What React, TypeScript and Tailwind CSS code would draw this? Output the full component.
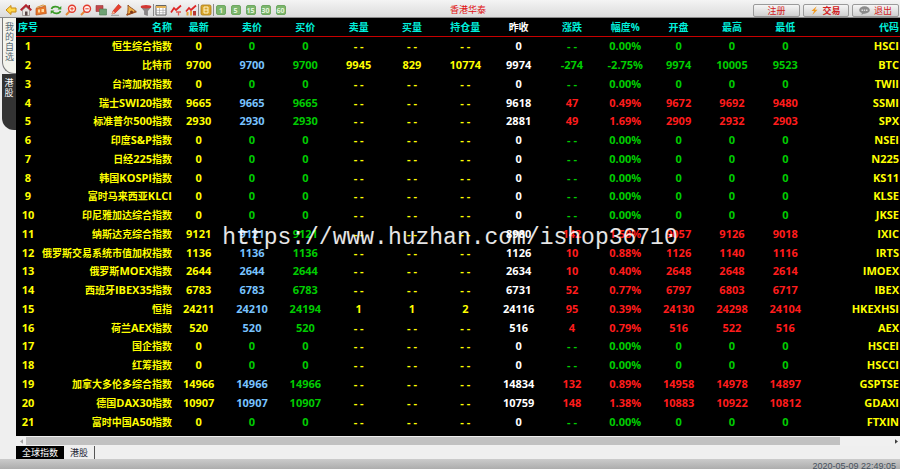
import { ReactNode, useState } from "react"

type Quote = {
  name: string
  last: string
  ask: string
  bid: string
  askVol?: string
  bidVol?: string
  holding?: string
  prev: string
  change?: string
  percent: string
  open: string
  high: string
  low: string
  code: string
}

const empty = (name: string, code: string): Quote => ({
  name,
  last: "0",
  ask: "0",
  bid: "0",
  prev: "0",
  percent: "0.00%",
  open: "0",
  high: "0",
  low: "0",
  code,
})

const quote = (
  name: string,
  last: string,
  prev: string,
  change: string,
  percent: string,
  open: string,
  high: string,
  low: string,
  code: string,
): Quote => ({
  name,
  last,
  ask: last,
  bid: last,
  prev,
  change,
  percent,
  open,
  high,
  low,
  code,
})

const quotes: Quote[] = [
  empty("恒生综合指数", "HSCI"),
  {
    ...quote("比特币", "9700", "9974", "-274", "-2.75%", "9974", "10005", "9523", "BTC"),
    askVol: "9945",
    bidVol: "829",
    holding: "10774",
  },
  empty("台湾加权指数", "TWII"),
  quote("瑞士SWI20指数", "9665", "9618", "47", "0.49%", "9672", "9692", "9480", "SSMI"),
  quote("标准普尔500指数", "2930", "2881", "49", "1.69%", "2909", "2932", "2903", "SPX"),
  empty("印度S&P指数", "NSEI"),
  empty("日经225指数", "N225"),
  empty("韩国KOSPI指数", "KS11"),
  empty("富时马来西亚KLCI", "KLSE"),
  empty("印尼雅加达综合指数", "JKSE"),
  quote("纳斯达克综合指数", "9121", "8980", "142", "1.58%", "9057", "9126", "9018", "IXIC"),
  quote("俄罗斯交易系统市值加权指数", "1136", "1126", "10", "0.88%", "1126", "1140", "1116", "IRTS"),
  quote("俄罗斯MOEX指数", "2644", "2634", "10", "0.40%", "2648", "2648", "2614", "IMOEX"),
  quote("西班牙IBEX35指数", "6783", "6731", "52", "0.77%", "6797", "6803", "6717", "IBEX"),
  {
    ...quote("恒指", "24211", "24116", "95", "0.39%", "24130", "24298", "24104", "HKEXHSI"),
    ask: "24210",
    bid: "24194",
    askVol: "1",
    bidVol: "1",
    holding: "2",
  },
  quote("荷兰AEX指数", "520", "516", "4", "0.79%", "516", "522", "516", "AEX"),
  empty("国企指数", "HSCEI"),
  empty("红筹指数", "HSCCI"),
  quote("加拿大多伦多综合指数", "14966", "14834", "132", "0.89%", "14958", "14978", "14897", "GSPTSE"),
  quote("德国DAX30指数", "10907", "10759", "148", "1.38%", "10883", "10922", "10812", "GDAXI"),
  empty("富时中国A50指数", "FTXIN"),
]

const columns = [
  "最新",
  "卖价",
  "买价",
  "卖量",
  "买量",
  "持仓量",
  "昨收",
  "涨跌",
  "幅度%",
  "开盘",
  "最高",
  "最低",
]

type Tool = { label: string; divider?: boolean; icon: ReactNode }

const tools: Tool[] = [
  {
    label: "后退",
    icon: <path d="M1 6 6 1.5V4h5v4H6v2.5z" fill="#ffd84a" stroke="#c98a10" />,
  },
  {
    label: "首页",
    icon: (
      <>
        <path d="M2.5 6v5.5h7V6L6 3z" fill="#e9e5e2" stroke="#8d8583" strokeWidth=".7" />
        <path d="M.7 6.3 6 1.3l5.3 5" fill="none" stroke="#b3202c" strokeWidth="2" />
        <path d="M8.5 1H10v3H8.5z" fill="#8a1d26" />
        <path d="M5 7.5h2.500v4H5z" fill="#5a4a4a" />
      </>
    ),
  },
  {
    label: "行情",
    icon: (
      <>
        <path d="M1 4.5 10.5 2l.8 7.5L1 11z" fill="#e8792b" stroke="#b9501a" strokeWidth=".7" />
        <path d="M1.5 3.5 8 1l3 1" fill="none" stroke="#d9953b" />
        <path d="M3 5.5h2v3H3zM6.5 5H9v3H6.5z" fill="#ffd9a0" />
      </>
    ),
  },
  {
    label: "刷新",
    icon: (
      <>
        <path d="M1.5 5c1-3 6-3 8-.8M10.5 7c-1 3-6 3-8 .8" fill="none" stroke="#3b9b27" strokeWidth="1.7" />
        <path d="M11.3 2v3.5H7.5zM.7 10V6.5h3.800z" fill="#3b9b27" />
      </>
    ),
  },
  {
    label: "放大",
    icon: (
      <>
        <path d="M1 11 4.5 7.5" stroke="#e88a3a" strokeWidth="2" />
        <circle cx="7" cy="4.8" r="3.5" fill="#fff0ee" stroke="#e33a2c" strokeWidth="1.4" />
        <path d="M5.3 4.8h3.4M7 3.1v3.4" stroke="#e33a2c" />
      </>
    ),
  },
  {
    label: "缩小",
    icon: (
      <>
        <path d="M1 11 4.5 7.5" stroke="#e88a3a" strokeWidth="2" />
        <circle cx="7" cy="4.8" r="3.5" fill="#fff0ee" stroke="#e33a2c" strokeWidth="1.4" />
        <path d="M5.3 4.8h3.4" stroke="#e33a2c" />
      </>
    ),
  },
  {
    label: "叠加",
    icon: (
      <>
        <path d="M1 1.500h7v6H1z" fill="#c6474a" stroke="#96383a" strokeWidth=".6" />
        <path d="M4.5 5h7v6h-7z" fill="#6fa274" stroke="#497b50" strokeWidth=".6" />
      </>
    ),
  },
  {
    label: "画线",
    icon: (
      <>
        <path d="M2 10 3 7l5.5-6.500L11.300 3 5 9z" fill="#e8402f" stroke="#c8382c" strokeWidth=".8" />
        <path d="M2 10 3 7l2 2z" fill="#f3c9a0" />
        <path d="M1 11.300h8" stroke="#999" />
      </>
    ),
  },
  {
    label: "预警",
    icon: (
      <>
        <path d="M3 1c1 2 5 3.500 8 6.500L2 11C3.300 8 3 4 3 1z" fill="#efb04a" stroke="#8b4a1c" strokeWidth=".9" />
        <path d="m1.500 11 10-3.500" stroke="#a3501f" strokeWidth="1.5" />
        <circle cx="6.5" cy="8" r="1.5" fill="#7a3517" />
      </>
    ),
  },
  {
    label: "筛选",
    icon: (
      <>
        <path d="M1 3h10L7.5 7v4.500l-3-1V7z" fill="#8a8587" stroke="#666" strokeWidth=".5" />
        <ellipse cx="6" cy="2.8" rx="5.3" ry="1.7" fill="#d33632" />
      </>
    ),
  },
  {
    label: "报价",
    divider: true,
    icon: (
      <>
        <path d="M1 1.5h10V11H1z" fill="#fff" stroke="#555" strokeWidth=".9" />
        <path d="M1 2h10v2H1z" fill="#e6b35a" />
        <path d="M1 6.3h10M1 8.7h10M4.5 4v7M8 4v7" stroke="#999" strokeWidth=".6" />
      </>
    ),
  },
  {
    label: "分时",
    icon: (
      <>
        <path d="M1 8.5 4 4l2 2 5-4.5" fill="none" stroke="#df2626" strokeWidth="1.7" />
        <path d="M6 8h5M8.5 8v3.500" stroke="#e35b55" strokeWidth="1.3" />
      </>
    ),
  },
  {
    label: "走势",
    icon: (
      <>
        <path d="M1.5 11.500V8h2v3.500zM5 11.500V7h2v4.500z" fill="#e4a23c" />
        <path d="M1 7.5 4 4l2 2 5-4.5" fill="none" stroke="#df2626" strokeWidth="1.7" />
        <path d="M8 7h3v4.500H8z" fill="#b93834" />
      </>
    ),
  },
  {
    label: "日线",
    divider: true,
    icon: (
      <>
        <rect x="1" y="1" width="10" height="10" rx="1.5" fill="#d9a62b" stroke="#a87915" strokeWidth=".8" />
        <path d="M4 3h4v6H4zM4 6h4" fill="none" stroke="#fff3c8" />
      </>
    ),
  },
]

const periods = ["1", "5", "15", "30", "60"]

const Toolbar = () => {
  return (
    <header className="relative flex h-[18px] shrink-0 items-center justify-between border-b border-[#8a8a8a] bg-linear-to-b from-[#f4f4f4] to-[#dcdcdc] pl-[3px] pt-[3px]">
      <nav className="flex items-center">
        {tools.map((tool) => (
          <button
            key={tool.label}
            aria-label={tool.label}
            className={`flex h-3 w-[15px] items-center justify-center ${
              tool.divider ? "border-l border-[#8a8a8a]" : ""
            }`}
          >
            <svg viewBox="0 0 12 12" className="h-3 w-3">
              {tool.icon}
            </svg>
          </button>
        ))}
        {periods.map((text) => (
          <button
            key={text}
            className={`flex h-3 w-[15px] items-center justify-center ${
              text === "1" ? "border-l border-[#8a8a8a]" : ""
            }`}
          >
            <span className="flex h-[10px] w-[10px] items-center justify-center rounded-xs border border-[#6ea860] bg-[#7cb66d] text-[7px] font-bold leading-none text-[#e4f5dc]">
              {text}
            </span>
          </button>
        ))}
      </nav>
      <h1 className="pointer-events-none absolute inset-x-0 top-1 ml-9 text-center text-[9px] leading-3 text-[#e01010]">
        香港华泰
      </h1>
      <div className="flex gap-[3px] pr-px text-[9px] text-[#d22020]">
        <button className="flex h-[13px] w-[47px] items-center justify-center rounded-xs border border-[#9a9a9a] bg-linear-to-b from-[#f6f6f6] to-[#cfcfcf] leading-none">
          注册
        </button>
        <button className="flex h-[13px] w-[46px] items-center justify-center gap-1 rounded-xs border border-[#9a9a9a] bg-linear-to-b from-[#f6f6f6] to-[#cfcfcf] font-bold leading-none">
          <svg viewBox="0 0 8 10" className="h-[9px] w-[7px]">
            <path d="M6.5 0 .5 5.5h3L1.5 10l6-6h-3z" fill="#f39a1e" />
          </svg>
          交易
        </button>
        <button className="flex h-[13px] w-[47px] items-center justify-center gap-1 rounded-xs border border-[#9a9a9a] bg-linear-to-b from-[#f6f6f6] to-[#cfcfcf] leading-none">
          <svg viewBox="0 0 11 9" className="h-[9px] w-[11px]">
            <ellipse cx="5.5" cy="4" rx="5.3" ry="3.7" fill="#8b8b8b" />
            <path d="M3 6.5 2.5 9l3-2z" fill="#8b8b8b" />
            <path d="M2.5 3.5H4V5H2.5zM4.8 3.5h1.400V5H4.800zM7 3.5h1.500V5H7z" fill="#ddd" />
          </svg>
          退出
        </button>
      </div>
    </header>
  )
}

// latin runs are set one size larger than the chinese characters
const IndexName = ({ name }: { name: string }) => {
  return (
    <>
      {name.split(/([\w&]+)/).map((part, i) =>
        i % 2 ? (
          <span key={i} className="text-[11px]">
            {part}
          </span>
        ) : (
          part
        ),
      )}
    </>
  )
}

const QuoteRow = ({ row, index }: { row: Quote; index: number }) => {
  const isUp = row.change !== undefined && !row.change.startsWith("-")
  const trend = isUp ? "text-[#ff1c1c]" : "text-[#00cc00]"
  return (
    <tr>
      <td>{index}</td>
      <td className="whitespace-nowrap text-right text-[10px]">
        <IndexName name={row.name} />
      </td>
      <td>{row.last}</td>
      <td className={row.ask === "0" ? "text-[#00cc00]" : "text-[#78c3ff]"}>
        {row.ask}
      </td>
      <td className="text-[#00cc00]">{row.bid}</td>
      <td>{row.askVol ?? "- -"}</td>
      <td>{row.bidVol ?? "- -"}</td>
      <td>{row.holding ?? "- -"}</td>
      <td className="text-white">{row.prev}</td>
      <td className={trend}>{row.change ?? "- -"}</td>
      <td className={trend}>{row.percent}</td>
      <td className={trend}>{row.open}</td>
      <td className={trend}>{row.high}</td>
      <td className={trend}>{row.low}</td>
      <td className="pr-px text-right">{row.code}</td>
    </tr>
  )
}

const QuoteTable = () => {
  return (
    <div className="min-h-0 flex-1 bg-black pb-[5px]">
      <table className="h-full w-full table-fixed border-separate border-spacing-0 text-center text-[11px] font-bold leading-4 text-[#ffff00]">
        <colgroup>
          <col className="w-6" />
          <col className="w-[132px]" />
          {columns.map((c) => (
            <col key={c} />
          ))}
          <col className="w-[88px]" />
        </colgroup>
        <thead>
          <tr className="h-[19px] text-[10px] text-[#00f0dc] *:border-b *:border-[#c80000]">
            <th className="whitespace-nowrap">序号</th>
            <th className="text-right">名称</th>
            {columns.map((c) => (
              <th key={c} className={c === "昨收" ? "text-white" : ""}>
                {c}
              </th>
            ))}
            <th className="pr-px text-right">代码</th>
          </tr>
        </thead>
        <tbody>
          {quotes.map((row, i) => (
            <QuoteRow key={row.code} row={row} index={i + 1} />
          ))}
        </tbody>
      </table>
    </div>
  )
}

const ScrollBar = () => {
  return (
    <div className="flex h-[10px] shrink-0 items-center bg-[#f0f0f0]">
      <button aria-label="向左滚动" className="flex w-[10px] justify-center">
        <svg viewBox="0 0 4 6" className="h-[5px] w-[3px]">
          <path d="M4 0v6L0 3z" fill="#a0a0a0" />
        </svg>
      </button>
      <div className="h-2 flex-1">
        <div className="h-full w-[94%] bg-[#c1c1c1]" />
      </div>
      <button aria-label="向右滚动" className="flex w-[8px] justify-center">
        <svg viewBox="0 0 4 6" className="h-[5px] w-[3px]">
          <path d="M0 0v6l4-3z" fill="#404040" />
        </svg>
      </button>
    </div>
  )
}

const App = () => {
  const [tab, setTab] = useState("全球指数")

  return (
    <div className="relative flex h-screen flex-col overflow-hidden bg-[#efefef] font-['Open_Sans','Noto_Sans_CJK_SC',sans-serif]">
      <Toolbar />
      <div className="flex min-h-0 flex-1">
        <aside className="flex w-4 shrink-0 flex-col pl-0.5 text-[9px] leading-[10px]">
          <button className="flex h-[56px] flex-col items-center rounded-bl-xl border-b border-l border-[#777] bg-[#f3f3ec] px-0.5 pt-1 text-[#566a74]">
            <span className="w-[9px] break-all">我的自选</span>
          </button>
          <button className="flex h-[56px] flex-col items-center rounded-bl-xl bg-[#333] px-0.5 pt-1 text-white">
            <span className="w-[9px] break-all">港股</span>
          </button>
        </aside>
        <main className="flex min-w-0 flex-1 flex-col">
          <QuoteTable />
          <ScrollBar />
          <div className="flex h-[13px] shrink-0 text-[9px] leading-[13px]">
            {["全球指数", "港股"].map((name) => (
              <button
                key={name}
                onClick={() => setTab(name)}
                className={`px-1.5 ${
                  tab === name
                    ? "bg-black text-white"
                    : "border-r border-[#555] text-[#223]"
                }`}
              >
                {name}
              </button>
            ))}
          </div>
        </main>
      </div>
      <footer className="h-[10px] shrink-0 bg-linear-to-b from-[#cbcbcb] to-[#adadad] pr-1 pt-0.5 text-right font-['Liberation_Sans',sans-serif] text-[9px] leading-[10px] text-[#45505c]">
        2020-05-09 22:49:05
      </footer>
      <p className="pointer-events-none absolute inset-x-0 top-[223px] text-center font-['Liberation_Mono',monospace] text-[23px] leading-[30px] text-white/90">
        https://www.huzhan.com/ishop36710
      </p>
    </div>
  )
}

export default App
